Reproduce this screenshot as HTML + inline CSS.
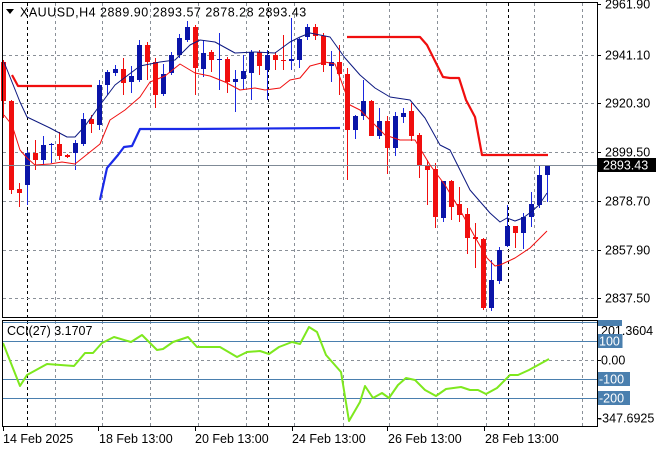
<!DOCTYPE html>
<html><head><meta charset="utf-8"><style>
html,body{margin:0;padding:0;background:#fff;}
body{width:660px;height:450px;overflow:hidden;position:relative;font-family:"Liberation Sans",sans-serif;}
svg{position:absolute;left:0;top:0;}
text{font-family:"Liberation Sans",sans-serif;font-size:12.5px;fill:#000;}
</style></head><body>
<svg id="s" width="660" height="450" xmlns="http://www.w3.org/2000/svg">
<g id="grid" stroke="#8a9098" stroke-width="1" stroke-dasharray="3,3" fill="none"></g>
<g id="cand"></g>
<g id="lines" fill="none"></g>
<g id="frame"></g>
</svg>
<script>
var NS="http://www.w3.org/2000/svg",s=document.getElementById('s');
function el(p,t,a,txt){var e=document.createElementNS(NS,t);for(var k in a)e.setAttribute(k,a[k]);if(txt!==undefined)e.textContent=txt;p.appendChild(e);return e;}
var G=document.getElementById('grid'),C=document.getElementById('cand'),L=document.getElementById('lines'),F=document.getElementById('frame');
var gx=[55,102,150,198,246,294,343,389,437,486,534,582];
gx.forEach(function(x){el(G,'line',{x1:x+.5,y1:3,x2:x+.5,y2:317});el(G,'line',{x1:x+.5,y1:321,x2:x+.5,y2:426});});
[27,268,508].forEach(function(x){el(G,'line',{x1:x+.5,y1:3,x2:x+.5,y2:317,stroke:'#000'});el(G,'line',{x1:x+.5,y1:321,x2:x+.5,y2:426,stroke:'#000'});});
[55,103,152,201,250,298].forEach(function(y){el(G,'line',{x1:3,y1:y+.5,x2:597,y2:y+.5});});
el(G,'line',{x1:3,y1:360.5,x2:597,y2:360.5});
el(L,'line',{x1:3,y1:165.5,x2:597,y2:165.5,stroke:'#7f8a96','stroke-width':1});
[322,341,379,398].forEach(function(y){el(L,'line',{x1:3,y1:y+.5,x2:597,y2:y+.5,stroke:'#4a7fae','stroke-width':1});});
var d=[
[62,101,60,118,0],[101,190,100,194,0],[189,193,183,207,0],[153,185,150,205,1],[153,160,140,170,0],
[145,160,136,165,1],[144,145,143,163,1],[144,156,132,160,0],[155,157,154,158,0],[143,153,140,170,1],
[119,144,113,146,1],[119,124,115,133,0],[85,125,80,130,1],[72,85,70,95,1],[69,73,65,76,1],
[69,83,58,95,0],[76,82,66,93,1],[45,80,40,82,1],[45,62,42,80,0],[62,95,58,108,0],
[74,94,64,96,1],[55,73,52,75,1],[38,55,34,58,1],[27,40,21,42,1],[27,68,25,95,0],
[53,69,40,77,1],[52,60,50,72,0],[59,60,33,90,1],[59,82,57,93,0],[79,82,70,112,1],
[71,79,55,90,1],[52,73,50,100,1],[52,66,50,75,0],[55,70,50,100,1],[55,60,52,70,0],
[60,61,35,70,0],[59,61,18,70,1],[39,60,38,68,1],[27,37,24,40,1],[27,36,24,40,0],
[36,65,33,72,0],[62,66,51,82,1],[62,74,45,95,0],[74,130,68,180,0],[116,130,115,139,1],
[101,116,80,120,1],[101,136,100,136,0],[121,136,108,139,1],[121,148,116,174,0],[116,148,112,156,1],
[113,117,108,123,1],[111,136,103,141,0],[135,166,133,178,0],[165,170,160,205,0],[169,217,163,228,0],
[181,218,181,222,1],[181,207,180,220,0],[204,215,187,222,0],[214,238,208,254,0],[237,239,223,268,0],
[239,308,238,310,0],[280,308,260,311,1],[250,281,247,284,1],[226,246,205,247,1],[226,233,226,248,0],
[217,233,213,249,1],[204,217,192,227,1],[175,205,165,208,1],[166,175,166,202,1]];
d.forEach(function(c,i){var x=3+8*i,col=c[4]?'#0a14a8':'#f00e0e';
el(C,'line',{x1:x+.5,y1:c[2],x2:x+.5,y2:c[3],stroke:c[4]?'#1a28e0':'#f00e0e','stroke-width':1});
var h=Math.max(1,c[1]-c[0]);el(C,'rect',{x:x-2,y:c[0],width:5,height:h,fill:col});});
function pl(pts,col,w){el(L,'polyline',{points:pts,stroke:col,'stroke-width':w,'stroke-linejoin':'round'});}
pl("12,75 18,86 92,86","#f00e0e",2.2);
pl("347,37 420,37 427,45 443,77 450,78 459,78 466,100 475,117 482,155 548,155","#f00e0e",2.2);
pl("100,200 107,168 118,155 124,147 132,146 140,129 188,129 340,128","#1a2ae8",2.2);
pl("4,62 12,82 20,102 27,117 50,128 67,137 75,137 85,126 100,105 115,85 140,66 160,62 175,60 190,45 200,40 215,42 235,53 255,52 275,53 290,42 300,37 310,33 330,37 345,58 360,75 375,88 390,97 410,100 425,118 440,145 450,150 460,170 470,190 490,213 500,222 507,218 515,221 523,218 531,212 539,205 547,193","#0c1880",1);
pl("4,115 12,125 20,150 27,158 35,165 50,164 62,162 75,164 90,152 100,144 110,120 125,110 140,97 150,82 165,76 180,64 195,73 210,76 225,82 240,90 255,88 265,90 280,88 290,80 300,78 310,66 325,62 335,64 350,105 360,110 375,125 385,135 400,140 415,140 430,165 445,185 460,210 475,237 487,258 495,266 500,265 515,258 530,248 547,231","#f00e0e",1);
pl("3,343 20,386 27,375 47,364 74,366 85,353 93,353 102,343 114,337 131,342 142,335 157,350 163,349 173,342 188,337 197,347 220,347 237,357 247,352 260,351 269,354 279,347 292,342 300,344 309,327 317,332 326,355 341,372 349,421 360,402 365,386 373,398 382,393 389,398 398,385 406,378 415,380 425,390 436,396 446,389 461,387 470,390 478,390 486,394 497,388 510,375 518,375 529,370 549,359","#7ee81e",2);
el(F,'rect',{x:2.5,y:2.5,width:595,height:315,fill:'none',stroke:'#000','stroke-width':1});
el(F,'rect',{x:2.5,y:320.5,width:595,height:106,fill:'none',stroke:'#000','stroke-width':1});
[4,55,103,152,201,250,298,322,341,360,379,398,418].forEach(function(y){el(F,'line',{x1:597,y1:y+.5,x2:601,y2:y+.5,stroke:'#000'});});
[['2961.90',4],['2941.10',55],['2920.30',103],['2899.50',152],['2878.70',201],['2857.90',250],['2837.50',298]].forEach(function(p){el(F,'text',{x:605,y:p[1]+4.5},p[0]);});
el(F,'rect',{x:598,y:158,width:58,height:14,fill:'#000'});
el(F,'text',{x:603,y:169.5,style:'fill:#fff'},'2893.43');
el(F,'rect',{x:598,y:320,width:24,height:6,fill:'#4a7fae'});
el(F,'text',{x:601,y:335},'201.3604');
[['100',341],['-100',379],['-200',398]].forEach(function(p){var w=p[0].length*7.5+2;el(F,'rect',{x:598,y:p[1]-7,width:w,height:14,fill:'#4a7fae'});el(F,'text',{x:599,y:p[1]+4.5,style:'fill:#fff'},p[0]);});
el(F,'text',{x:601,y:364.5},'0.00');
el(F,'text',{x:598,y:422.5},'-347.6925');
el(F,'text',{x:7,y:335},'CCI(27) 3.1707');
el(F,'polygon',{points:'6,9 14,9 10,14',fill:'#000'});
el(F,'text',{x:20,y:16.5,'letter-spacing':'0.5'},'XAUUSD,H4  2889.90 2893.57 2878.28 2893.43');
[3,98,195,292,387,484].forEach(function(x){el(F,'line',{x1:x+.5,y1:427,x2:x+.5,y2:431,stroke:'#000'});});
[['14 Feb 2025',3],['18 Feb 13:00',99],['20 Feb 13:00',195],['24 Feb 13:00',292],['26 Feb 13:00',388],['28 Feb 13:00',485]].forEach(function(p){el(F,'text',{x:p[1],y:443},p[0]);});
</script>
</body></html>
